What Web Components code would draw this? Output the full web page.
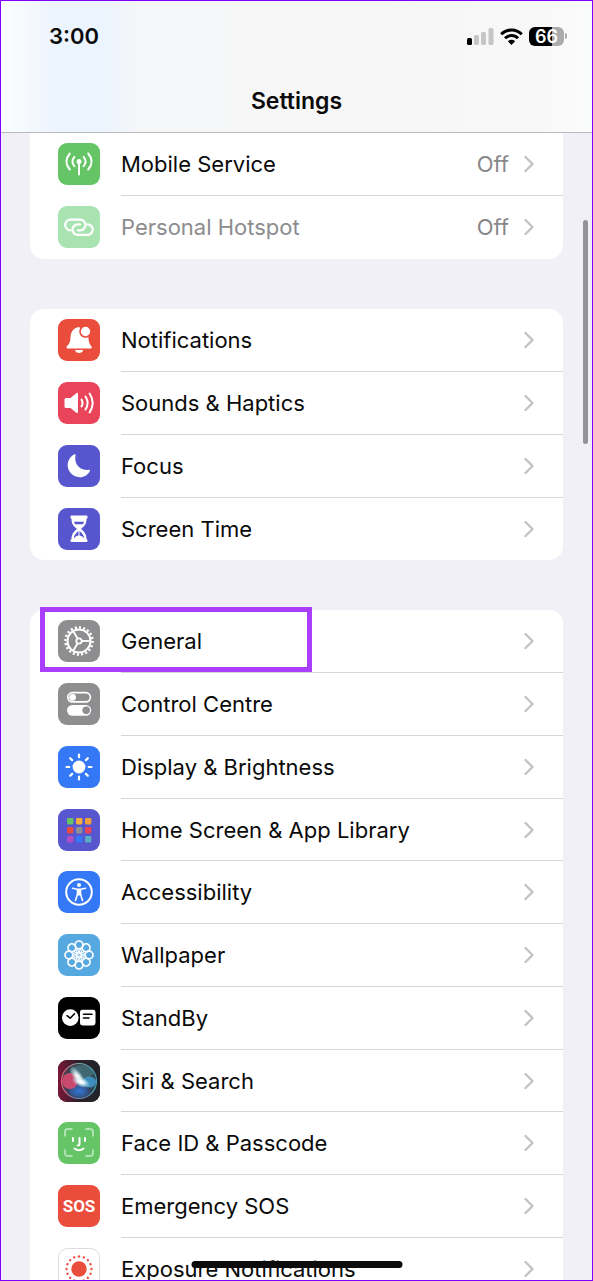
<!DOCTYPE html>
<html lang="en-GB">
<head>
<meta charset="utf-8">
<meta name="viewport" content="width=device-width, initial-scale=1">
<title>Settings</title>
<style>
    html, body {
        height: 100%;
        margin: 0;
    }

    body {
        font-family: Inter, "Liberation Sans", sans-serif;
        color: #0a0a0a;
    }
</style>
</head>
<body>
<settings-screen>
    <status-bar slot="header" time="3:00" battery="66"></status-bar>
    <span slot="title">Settings</span>

    <settings-group>
        <settings-row icon="mobile" color="#64c466" label="Mobile Service" value="Off"></settings-row>
        <settings-row icon="hotspot" color="#a9e3b1" label="Personal Hotspot" value="Off" dimmed></settings-row>
    </settings-group>

    <settings-group>
        <settings-row icon="notifications" color="#eb4d3d" label="Notifications"></settings-row>
        <settings-row icon="sounds" color="#ea445a" label="Sounds &amp; Haptics"></settings-row>
        <settings-row icon="focus" color="#5756ce" label="Focus"></settings-row>
        <settings-row icon="screentime" color="#5756ce" label="Screen Time"></settings-row>
    </settings-group>

    <settings-group>
        <settings-row icon="general" color="#8e8e90" label="General" marked></settings-row>
        <settings-row icon="control" color="#8e8e90" label="Control Centre"></settings-row>
        <settings-row icon="display" color="#3478f6" label="Display &amp; Brightness"></settings-row>
        <settings-row icon="home" color="#5756ce" label="Home Screen &amp; App Library"></settings-row>
        <settings-row icon="accessibility" color="#3478f6" label="Accessibility"></settings-row>
        <settings-row icon="wallpaper" color="#56a8e1" label="Wallpaper"></settings-row>
        <settings-row icon="standby" color="#000000" label="StandBy"></settings-row>
        <settings-row icon="siri" color="#25252b" label="Siri &amp; Search"></settings-row>
        <settings-row icon="faceid" color="#64c466" label="Face ID &amp; Passcode"></settings-row>
        <settings-row icon="sos" color="#eb4d3d" label="Emergency SOS"></settings-row>
        <settings-row icon="exposure" color="#ffffff" label="Exposure Notifications"></settings-row>
    </settings-group>
</settings-screen>

<script>
(function() {
    // Repeats a shape around the middle of the 42x42 icon box
    const spin = (count, shape) => Array.from({ length: count }, (_, i) =>
        `<g transform="rotate(${i * 360 / count} 21 21)">${shape}</g>`).join("");

    const tiles = ["#64c466", "#f1ae3c", "#f0a03c", "#eb4d3d", "#8e8e93", "#ea445a", "#b14fc4", "#3478f6", "#59adc4"];

    const icons = {
        mobile: `
            <circle cx="21" cy="18.500" r="2.500" fill="#fff"/>
            <g fill="none" stroke="#fff" stroke-width="2" stroke-linecap="round">
                <path d="M21 19v12.500"/>
                <path d="M16.400 13.800q-3.800 4.700 0 9.400M25.600 13.800q3.800 4.700 0 9.400"/>
                <path d="M11.800 10.500q-6.800 8 0 16M30.200 10.500q6.800 8 0 16"/>
            </g>`,
        hotspot: `
            <g fill="none" stroke="#fff" stroke-width="2.200" stroke-linecap="round">
                <path d="M12.500 24.300a5.300 5.300 0 0 1 0-10.600h9.700a5.300 5.300 0 0 1 0 10.600h-2.400"/>
                <path d="M29.500 18.300a5.300 5.300 0 0 1 0 10.600h-9.700a5.300 5.300 0 0 1 0-10.600h2.400"/>
            </g>`,
        notifications: `
            <path fill="#fff" d="M9.500 29.500c-1.300 0-1.300-1.600-.4-2.500 2.200-2.200 3.200-4 3.400-8.500.3-5.600 2.700-9.700 8.500-10.500l9.300 8.500c.2 4.900.6 8.300 2.800 10.500.9.900.9 2.500-.4 2.500zM17 31h8.200c-.5 4-7.700 4-8.200 0z"/>
            <circle cx="27.500" cy="12.500" r="5.500" fill="#fff" stroke="#eb4d3d" stroke-width="1.600"/>`,
        sounds: `
            <path fill="#fff" d="M6.500 17.500q0-1.500 1.500-1.500h4.500l5.800-4.800c.8-.7 1.700-.3 1.700.8v18c0 1.100-.9 1.500-1.700.8L12.500 26H8q-1.500 0-1.500-1.500z"/>
            <g fill="none" stroke="#fff" stroke-width="2" stroke-linecap="round">
                <path d="M23.500 17.500q2.200 3.500 0 7M27.500 14.500q4.200 6.500 0 13M31.600 11.500q6.200 9.500 0 19"/>
            </g>`,
        focus: `<path fill="#fff" d="M16.500 9.300c.6-.4 1.300 0 1.100.8-2 9 4.200 16 13.300 14.600.9-.1 1.400.5 1 1.300C29 31.500 23.500 33.500 18 31.500 8 28 6.500 14.500 16.500 9.300z"/>`,
        screentime: `
            <path fill="#fff" d="M13.500 7.500h15q1 0 1 1v1.300q0 1-1 1c0 5-1.700 7.200-5.500 10.200 3.800 3 5.500 5.500 5.500 10.300q1 0 1 1v.7q0 1-1 1h-15q-1 0-1-1v-.7q0-1 1-1c0-4.800 1.700-7.300 5.500-10.300-3.800-3-5.500-5.200-5.500-10.200q-1 0-1-1V8.500q0-1 1-1z"/>
            <path fill="#5756ce" d="M16 13.800h10c-.2 1-.6 1.800-1.200 2.500h-7.600c-.6-.7-1-1.500-1.200-2.500zM20.500 23v4.500c-2.600.5-4.200 1.700-4.800 3.200.2-3.700 2.400-5.700 4.800-7.700zM21.500 23v4.500c2.600.5 4.200 1.700 4.800 3.200-.2-3.700-2.400-5.700-4.800-7.700z"/>`,
        general: `
            <g fill="none" stroke="#fff">
                <circle cx="21" cy="21" r="11.500" stroke-width="2"/>
                <circle cx="21" cy="21" r="13.600" stroke-width="2.400" pathLength="40" stroke-dasharray="1"/>
                <circle cx="21" cy="21" r="2.700" stroke-width="1.800"/>
                ${spin(3, `<path d="M24 21h7.500" stroke-width="1.900"/>`)}
            </g>`,
        control: `
            <rect x="9.800" y="9.700" width="22.600" height="9.200" rx="4.600" fill="none" stroke="#fff" stroke-width="1.700"/>
            <circle cx="14.600" cy="14.300" r="3.400" fill="#fff"/>
            <rect x="9" y="22" width="24.200" height="10.700" rx="5.350" fill="#fff"/>
            <circle cx="28.200" cy="27.350" r="3.800" fill="#8e8e90"/>`,
        display: `
            <circle cx="21" cy="21" r="6.400" fill="#fff"/>
            ${spin(8, `<path d="M21 8.500v2.800" stroke="#fff" stroke-width="2.200" stroke-linecap="round"/>`)}`,
        home: tiles.map((fill, i) =>
            `<rect x="${9 + i % 3 * 9}" y="${9 + Math.floor(i / 3) * 9}" width="6.400" height="6.400" rx="1.300" fill="${fill}"/>`).join(""),
        accessibility: `
            <circle cx="21" cy="21" r="12.800" fill="none" stroke="#fff" stroke-width="2"/>
            <circle cx="21" cy="13.900" r="2" fill="#fff"/>
            <path d="M14.500 17.200l4.800 1h3.400l4.800-1M19.500 18.500v4.500l-2 6.500M22.500 18.500v4.500l2 6.500" fill="none" stroke="#fff" stroke-width="1.600" stroke-linecap="round" stroke-linejoin="round"/>
            <path d="M19 18h4l-.3 6.500h-3.400z" fill="#fff"/>`,
        wallpaper: `
            <g fill="none" stroke="#fff" stroke-width="1.700">
                ${spin(8, `<circle cx="21" cy="10.900" r="3.900"/><path d="M19.400 14.500l1.600 4.500 1.600-4.500" stroke-width="1.200"/>`)}
                <circle cx="21" cy="21" r="2.400" stroke-width="1.200"/>
            </g>`,
        standby: `
            <circle cx="12.300" cy="20.600" r="8.300" fill="#fff"/>
            <path d="M9 18.700l3.200 2.500 4.300-4.500" fill="none" stroke="#000" stroke-width="1.500" stroke-linecap="round" stroke-linejoin="round"/>
            <rect x="22" y="12.700" width="15.500" height="15.700" rx="2.400" fill="#fff"/>
            <path d="M25.500 17.300h8.500M25.500 21h5.500" stroke="#000" stroke-width="1.500" stroke-linecap="round"/>`,
        siri: `
            <defs>
                <linearGradient id="back"><stop offset="0" stop-color="#7b1736"/><stop offset=".45" stop-color="#30202b"/><stop offset="1" stop-color="#202329"/></linearGradient>
                <linearGradient id="rim"><stop offset="0" stop-color="#e75a79"/><stop offset=".5" stop-color="#7fa3ad"/><stop offset="1" stop-color="#3a9caf"/></linearGradient>
                <radialGradient id="blue"><stop offset="0" stop-color="#3577d8"/><stop offset=".6" stop-color="#3064b5" stop-opacity=".7"/><stop offset="1" stop-color="#283a7d" stop-opacity="0"/></radialGradient>
                <radialGradient id="glow"><stop offset="0" stop-color="#fff"/><stop offset=".3" stop-color="#f6fcff" stop-opacity=".9"/><stop offset="1" stop-color="#a9e7ee" stop-opacity="0"/></radialGradient>
            </defs>
            <rect width="42" height="42" rx="9" fill="url(#back)"/>
            <circle cx="21" cy="21" r="17.500" fill="#3b4a58" fill-opacity=".8" stroke="url(#rim)" stroke-width="1.200"/>
            <ellipse cx="24" cy="12" rx="12" ry="7" fill="#4a8f98" fill-opacity=".5"/>
            <ellipse cx="21" cy="31" rx="13" ry="9" fill="url(#blue)"/>
            <circle cx="12" cy="21" r="8" fill="#d84a70" fill-opacity=".9"/>
            <ellipse cx="31.500" cy="22" rx="6.500" ry="5.500" fill="#3e9ad0" fill-opacity=".85"/>
            <ellipse cx="20" cy="17" rx="5" ry="13" fill="url(#glow)" transform="rotate(-35 20 17)"/>
            <ellipse cx="23" cy="22" rx="10" ry="5" fill="url(#glow)" transform="rotate(20 23 22)"/>`,
        faceid: `
            <path d="M7 14.500V10q0-3 3-3h4.500M27.500 7H32q3 0 3 3v4.500M35 27.500V31q0 3-3 3h-4.500M14.500 34H10q-3 0-3-3v-3.500" fill="none" stroke="#b1e2b2" stroke-width="2"/>
            <path d="M15 16v3M27 16v3M21.500 16v6q0 1.500-1.800 1.500M16.500 26.500q4.500 3.500 9 0" fill="none" stroke="#fff" stroke-width="2" stroke-linecap="round"/>`,
        sos: `<text x="21" y="27" text-anchor="middle" font-family="Roboto, sans-serif" font-size="17" font-weight="700" fill="#fff">SOS</text>`,
        exposure: `
            <rect x=".5" y=".5" width="41" height="41" rx="9" fill="none" stroke="#dcdcde"/>
            <circle cx="21" cy="21" r="7.700" fill="#eb4d3d"/>
            ${spin(16, `<circle cx="21" cy="8.500" r="1.200" fill="#eb4d3d"/>`)}`
    };

    /* Icon */
    class SettingsIcon extends HTMLElement {
        connectedCallback() {
            this.attachShadow({ mode: "open" }).innerHTML = `
            <style>
            :host {
                background-color: ${this.getAttribute("color")};
                border-radius: 9px;
                display: block;
                height: 42px;
                width: 42px;
            }

            svg {
                display: block;
            }
            </style>
            <svg width="42" height="42" viewBox="0 0 42 42" aria-hidden="true">${icons[this.getAttribute("name")]}</svg>
            `;
        }
    }

    /* Row */
    const rowTemplate = document.createElement("template");
    rowTemplate.innerHTML = `
    <style>
    :host {
        display: block;
        position: relative;
    }

    .row {
        box-sizing: border-box;
        color: inherit;
        display: flex;
        gap: 21px;
        height: 100%;
        padding-left: 28px;
        text-decoration: none;
    }

    settings-icon {
        flex: none;
        margin-top: 10px;
    }

    .body {
        align-items: center;
        border-bottom: 1px solid #d6d6d8;
        display: flex;
        flex: 1;
        min-width: 0;
        padding-right: 29px;
    }

    :host(:last-of-type) .body {
        border-bottom-color: transparent;
    }

    .label {
        flex: 1;
        font-size: 22px;
        line-height: 28px;
        white-space: nowrap;
    }

    :host([dimmed]) .label {
        color: #8c8c8e;
    }

    .value {
        color: #87878a;
        font-size: 22px;
        line-height: 28px;
        margin-right: 15px;
    }

    .chevron {
        display: block;
        flex: none;
    }

    :host([marked])::after {
        border: 5px solid #a93efb;
        box-sizing: border-box;
        content: "";
        height: 65px;
        left: 10px;
        pointer-events: none;
        position: absolute;
        top: -3px;
        width: 272px;
    }
    </style>
    <a class="row" href="#">
        <settings-icon></settings-icon>
        <span class="body">
            <span class="label"></span>
            <span class="value"></span>
            <svg class="chevron" width="10" height="18" viewBox="0 0 10 18" aria-hidden="true">
                <path d="M1.500 2l7 7-7 7" fill="none" stroke="#c3c3c6" stroke-width="2.400" stroke-linecap="round" stroke-linejoin="round"/>
            </svg>
        </span>
    </a>
    `;

    class SettingsRow extends HTMLElement {
        connectedCallback() {
            const content = rowTemplate.content.cloneNode(true);
            const icon = content.querySelector("settings-icon");

            icon.setAttribute("name", this.getAttribute("icon"));
            icon.setAttribute("color", this.getAttribute("color"));
            content.querySelector(".label").textContent = this.getAttribute("label");
            content.querySelector(".value").textContent = this.getAttribute("value");

            this.attachShadow({ mode: "open" }).append(content);
        }
    }

    /* Group */
    class SettingsGroup extends HTMLElement {
        connectedCallback() {
            this.attachShadow({ mode: "open" }).innerHTML = `
            <style>
            :host {
                background-color: #fff;
                border-radius: 14px;
                display: block;
            }

            :host(:first-of-type) {
                border-top-left-radius: 0;
                border-top-right-radius: 0;
            }

            ::slotted(*) {
                height: 63px;
            }

            ::slotted(:nth-child(4n)) {
                height: 62px;
            }
            </style>
            <slot></slot>
            `;
        }
    }

    /* Status bar */
    class StatusBar extends HTMLElement {
        connectedCallback() {
            const battery = this.getAttribute("battery");

            this.attachShadow({ mode: "open" }).innerHTML = `
            <style>
            :host {
                align-items: center;
                display: flex;
                justify-content: space-between;
                padding: 21px 25px 0 48px;
            }

            .time {
                font-size: 22px;
                font-weight: 600;
                line-height: 28px;
            }

            .indicators {
                align-items: center;
                display: flex;
                gap: 6px;
            }

            svg {
                display: block;
            }

            .battery {
                align-items: center;
                display: flex;
                gap: 1px;
            }

            .level {
                background: linear-gradient(to right, #000 ${battery}%, #ababab ${battery}%);
                border-radius: 6px;
                color: #fff;
                font-size: 18px;
                font-weight: 600;
                line-height: 19px;
                text-align: center;
                width: 35px;
            }

            .tip {
                background-color: #ababab;
                border-radius: 0 2px 2px 0;
                height: 6px;
                width: 2px;
            }
            </style>
            <span class="time">${this.getAttribute("time")}</span>
            <div class="indicators">
                <svg width="27" height="17" viewBox="0 0 27 17" aria-hidden="true">
                    <rect y="10" width="5" height="7" rx="1.500"/>
                    <g fill="#c6c6c6">
                        <rect x="7" y="7" width="5" height="10" rx="1.500"/>
                        <rect x="14" y="4" width="5" height="13" rx="1.500"/>
                        <rect x="21.500" width="5" height="17" rx="1.500"/>
                    </g>
                </svg>
                <svg width="23" height="17" viewBox="0 0 23 17" aria-hidden="true">
                    <g fill="none" stroke="#000" stroke-width="3">
                        <path d="M1.200 6.200a14.600 14.600 0 0 1 20.600 0"/>
                        <path d="M5 10.300a9.200 9.200 0 0 1 13 0"/>
                    </g>
                    <path d="M11.500 17l-3.600-3.700a5.200 5.200 0 0 1 7.200 0z"/>
                </svg>
                <div class="battery">
                    <span class="level">${battery}</span>
                    <span class="tip"></span>
                </div>
            </div>
            `;
        }
    }

    /* Screen */
    class SettingsScreen extends HTMLElement {
        connectedCallback() {
            this.attachShadow({ mode: "open" }).innerHTML = `
            <style>
            :host {
                background-color: #f1f0f6;
                border: 1px solid #7f00ff;
                box-sizing: border-box;
                display: flex;
                flex-direction: column;
                height: 100%;
                overflow: hidden;
                position: relative;
            }

            header {
                background: linear-gradient(to right, #fcfefe 0, #f5f9fe 28px, #ecf4fe 56px, #ecf4fe 100px, #f4f6f8 134px, #f6f6f6 50%, #f8f8f8 92%, #fbfcfc);
                border-bottom: 1px solid #b9b9bb;
                box-sizing: border-box;
                flex: none;
                height: 132px;
            }

            h1 {
                font-size: 23px;
                font-weight: 600;
                line-height: 30px;
                margin: 0;
                padding-top: 36px;
                text-align: center;
            }

            main {
                display: flex;
                flex: 1;
                flex-direction: column;
                gap: 50px;
                min-height: 0;
                overflow: hidden;
                padding: 0 29px;
            }

            ::slotted(settings-group) {
                flex: none;
            }

            .scrollbar {
                background-color: #949498;
                border-radius: 3px;
                height: 224px;
                position: absolute;
                right: 4px;
                top: 219px;
                width: 5px;
            }

            .home {
                background-color: #0c0c0c;
                border-radius: 4px;
                bottom: 12px;
                height: 7px;
                left: 50%;
                position: absolute;
                transform: translateX(-50%);
                width: 211px;
            }
            </style>
            <header>
                <slot name="header"></slot>
                <h1><slot name="title"></slot></h1>
            </header>
            <main><slot></slot></main>
            <div class="scrollbar"></div>
            <div class="home"></div>
            `;
        }
    }

    customElements.define("settings-icon", SettingsIcon);
    customElements.define("settings-row", SettingsRow);
    customElements.define("settings-group", SettingsGroup);
    customElements.define("status-bar", StatusBar);
    customElements.define("settings-screen", SettingsScreen);
})();
</script>
</body>
</html>
